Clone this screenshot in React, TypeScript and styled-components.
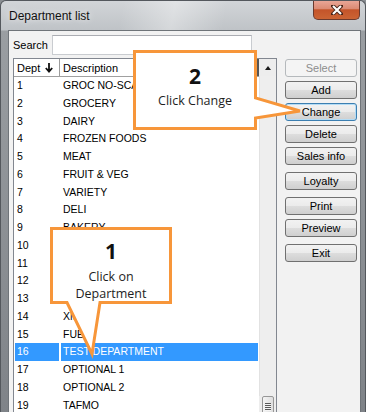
import React from "react";
import styled, { createGlobalStyle, css } from "styled-components";

const orange = "#f7963a";

const GlobalStyle = createGlobalStyle`
  html, body {
    margin: 0;
    padding: 0;
  }
  body {
    width: 366px;
    height: 412px;
    overflow: hidden;
    background: #8a8e92;
    font-family: "Liberation Sans", Arial, sans-serif;
  }
`;

const Window = styled.div`
  position: relative;
  display: flex;
  flex-direction: column;
  box-sizing: border-box;
  width: 366px;
  height: 412px;
  border: 1px solid #54585d;
  border-bottom: none;
  border-radius: 6px 6px 0 0;
  background: linear-gradient(
      100deg,
      rgba(255, 255, 255, 0) 28%,
      rgba(255, 255, 255, 0.35) 40%,
      rgba(255, 255, 255, 0) 52%
    ),
    linear-gradient(to bottom, #d2d5d8 0, #bfc3c7 29px, #9a9ea2 30px, #7f8388 100%);
  overflow: hidden;
`;

const TitleBar = styled.div`
  display: flex;
  justify-content: space-between;
  align-items: flex-start;
  flex: none;
  height: 29px;
`;

const Title = styled.span`
  padding: 8px 0 0 8px;
  font-size: 12px;
  color: #111;
  text-shadow: 0 0 6px rgba(255, 255, 255, 0.9);
`;

const CloseButton = styled.div`
  display: flex;
  justify-content: center;
  align-items: center;
  width: 45px;
  height: 19px;
  margin: -1px 5px 0 0;
  border: 1px solid #6b3a2e;
  border-top: none;
  border-radius: 0 0 5px 5px;
  background: linear-gradient(
    to bottom,
    #eba99b 0%,
    #dc8b74 45%,
    #c4542a 52%,
    #cb6434 100%
  );
`;

const Client = styled.div`
  flex: 1;
  min-height: 0;
  margin: 0 4px 0 7px;
  padding: 4px 0 0 4px;
  border: 1px solid #6f7479;
  border-bottom: none;
  background: #f2f2f2;
  overflow: hidden;
`;

const SearchRow = styled.div`
  display: flex;
  align-items: center;
  height: 20px;
`;

const SearchLabel = styled.label`
  width: 39px;
  font-size: 11px;
  color: #000;
`;

const SearchInput = styled.div`
  box-sizing: border-box;
  width: 200px;
  height: 20px;
  border: 1px solid #c9ccd0;
  border-top-color: #abadb3;
  background: #fff;
`;

const Body = styled.div`
  display: flex;
  align-items: flex-start;
  margin-top: 3px;
`;

const ListBox = styled.div`
  display: flex;
  box-sizing: border-box;
  width: 264px;
  height: 360px;
  border: 1px solid #828790;
  background: #fff;
`;

const ListMain = styled.div`
  display: flex;
  flex-direction: column;
  width: 245px;
`;

const Header = styled.div`
  display: grid;
  grid-template-columns: 46px 1fr;
  box-sizing: border-box;
  height: 18px;
  border-bottom: 1px solid #a0a0a0;
`;

const HeaderCell = styled.div<{ $last?: boolean }>`
  display: flex;
  align-items: center;
  gap: 5px;
  padding-left: 3px;
  font-size: 11px;
  color: #000;
  border-right: ${(p) => (p.$last ? "2px solid #555" : "1px solid #9c9c9c")};
`;

const Row = styled.div`
  display: grid;
  grid-template-columns: 44px 1fr;
  column-gap: 2px;
  padding: 0 1px;
  height: 17.75px;
  line-height: 17.75px;
  font-size: 10.5px;
  color: #000;
`;

const Cell = styled.div<{ $selected?: boolean }>`
  padding-left: 2px;
  white-space: nowrap;
  overflow: hidden;
  ${(p) =>
    p.$selected &&
    css`
      background: #3399ff;
      color: #fff;
    `}
`;

const Scrollbar = styled.div`
  display: flex;
  flex-direction: column;
  width: 17px;
  background: #ededed;
`;

const ScrollArrow = styled.div`
  display: flex;
  justify-content: center;
  align-items: center;
  height: 17px;
  flex: none;

  &::after {
    content: "";
    border-left: 3.5px solid transparent;
    border-right: 3.5px solid transparent;
    border-bottom: 4px solid #1a1a1a;
  }
`;

const ScrollTrack = styled.div`
  flex: 1;
  border-left: 1px solid #e2e2e2;
  background: #eeeeee;
`;

const ScrollThumb = styled.div`
  display: flex;
  justify-content: center;
  align-items: center;
  flex: none;
  box-sizing: border-box;
  height: 21px;
  margin: 0 2px 0 3px;
  border: 1px solid #979797;
  border-radius: 2px;
  background: linear-gradient(to right, #f4f4f4, #dedede);

  &::after {
    content: "";
    width: 6px;
    height: 8px;
    background: repeating-linear-gradient(
      to bottom,
      #5a5a5a 0 1px,
      #f4f4f4 1px 2px
    );
  }
`;

const ButtonPanel = styled.div`
  display: flex;
  flex-direction: column;
  padding: 1px 0 0 8px;
`;

const Button = styled.div<{ $spaced?: boolean; $disabled?: boolean; $focused?: boolean }>`
  display: flex;
  justify-content: center;
  align-items: center;
  box-sizing: border-box;
  width: 72px;
  height: 18px;
  margin-top: ${(p) => (p.$spaced ? 7 : 4)}px;
  border: 1px solid #707070;
  border-radius: 3px;
  background: linear-gradient(
    to bottom,
    #f2f2f2 0%,
    #ebebeb 50%,
    #dddddd 51%,
    #cfcfcf 100%
  );
  font-size: 11px;
  color: #000;

  &:first-child {
    margin-top: 0;
  }

  ${(p) =>
    p.$disabled &&
    css`
      border-color: #b5b9bc;
      background: #f4f4f4;
      color: #8d8d8d;
    `}

  ${(p) =>
    p.$focused &&
    css`
      border-color: #3c7fb1;
      box-shadow: inset 0 0 0 1px #b4dcf5;
    `}
`;

const CalloutWrap = styled.div<{ $x: number; $y: number; $w: number; $h: number; $pt: number }>`
  position: absolute;
  left: ${(p) => p.$x - 1}px;
  top: ${(p) => p.$y - 1}px;
  width: ${(p) => p.$w}px;
  height: ${(p) => p.$h}px;
  display: flex;
  flex-direction: column;
  align-items: center;
  box-sizing: border-box;
  padding-top: ${(p) => p.$pt}px;
  font-family: "Open Sans", "Liberation Sans", sans-serif;
  color: #1e1e1e;
  z-index: 5;
`;

const CalloutShape = styled.svg`
  position: absolute;
  left: 0;
  top: 0;
  overflow: visible;
  z-index: -1;
`;

const StepNumber = styled.div`
  font-size: 21px;
  font-weight: 700;
  line-height: 24px;
  margin-bottom: 4.5px;
  color: #111;
`;

const CalloutLine = styled.div`
  font-size: 12.5px;
  line-height: 17px;
`;

// rows 10-13 sit under callout 1, their names are not visible
const rows: [string, string][] = [
  ["1", "GROC NO-SCALE"],
  ["2", "GROCERY"],
  ["3", "DAIRY"],
  ["4", "FROZEN FOODS"],
  ["5", "MEAT"],
  ["6", "FRUIT & VEG"],
  ["7", "VARIETY"],
  ["8", "DELI"],
  ["9", "BAKERY"],
  ["10", ""],
  ["11", ""],
  ["12", ""],
  ["13", ""],
  ["14", "XMAS"],
  ["15", "FUEL"],
  ["16", "TEST DEPARTMENT"],
  ["17", "OPTIONAL 1"],
  ["18", "OPTIONAL 2"],
  ["19", "TAFMO"],
];

const buttons = [
  { label: "Select", disabled: true },
  { label: "Add" },
  { label: "Change", focused: true },
  { label: "Delete" },
  { label: "Sales info" },
  { label: "Loyalty", spaced: true },
  { label: "Print", spaced: true },
  { label: "Preview" },
  { label: "Exit", spaced: true },
];

interface CalloutProps {
  x: number;
  y: number;
  w: number;
  h: number;
  pt: number;
  path: string;
  step: string;
  lines: string[];
}

function Callout({ x, y, w, h, pt, path, step, lines }: CalloutProps) {
  return (
    <CalloutWrap $x={x} $y={y} $w={w} $h={h} $pt={pt}>
      <CalloutShape width={w} height={h}>
        <path d={path} fill="#fff" stroke={orange} strokeWidth={3} />
      </CalloutShape>
      <StepNumber>{step}</StepNumber>
      {lines.map((line) => (
        <CalloutLine key={line}>{line}</CalloutLine>
      ))}
    </CalloutWrap>
  );
}

export default function App() {
  return (
    <>
      <GlobalStyle />
      <Window>
        <TitleBar>
          <Title>Department list</Title>
          <CloseButton>
            <svg width="12" height="10" viewBox="0 0 12 10">
              <path d="M2 1 L10 9 M10 1 L2 9" stroke="#4a2418" strokeWidth="4" strokeLinecap="square" />
              <path d="M2 1 L10 9 M10 1 L2 9" stroke="#fff" strokeWidth="2.2" />
            </svg>
          </CloseButton>
        </TitleBar>
        <Client>
          <SearchRow>
            <SearchLabel>Search</SearchLabel>
            <SearchInput />
          </SearchRow>
          <Body>
            <ListBox>
              <ListMain>
                <Header>
                  <HeaderCell>
                    Dept
                    <svg width="8" height="10" viewBox="0 0 8 10">
                      <path d="M4 0 V8 M0.8 5 L4 8.6 L7.2 5" stroke="#111" strokeWidth="1.8" fill="none" />
                    </svg>
                  </HeaderCell>
                  <HeaderCell $last>Description</HeaderCell>
                </Header>
                {rows.map(([num, name]) => {
                  const selected = num === "16";
                  return (
                    <Row key={num}>
                      <Cell $selected={selected}>{num}</Cell>
                      <Cell $selected={selected}>{name}</Cell>
                    </Row>
                  );
                })}
              </ListMain>
              <Scrollbar>
                <ScrollArrow />
                <ScrollTrack />
                <ScrollThumb />
              </Scrollbar>
            </ListBox>
            <ButtonPanel>
              {buttons.map((b) => (
                <Button
                  key={b.label}
                  $disabled={b.disabled}
                  $focused={b.focused}
                  $spaced={b.spaced}
                >
                  {b.label}
                </Button>
              ))}
            </ButtonPanel>
          </Body>
        </Client>
        <Callout
          x={133}
          y={50}
          w={124}
          h={80}
          pt={13.5}
          path="M1.5 1.5 H122.5 V48 L167 61 L122.5 68 V78.5 H1.5 Z"
          step="2"
          lines={["Click Change"]}
        />
        <Callout
          x={50}
          y={227}
          w={122}
          h={77}
          pt={12}
          path="M1.5 1.5 H120.5 V75.5 H50 L42 127 L17 75.5 H1.5 Z"
          step="1"
          lines={["Click on", "Department"]}
        />
      </Window>
    </>
  );
}
